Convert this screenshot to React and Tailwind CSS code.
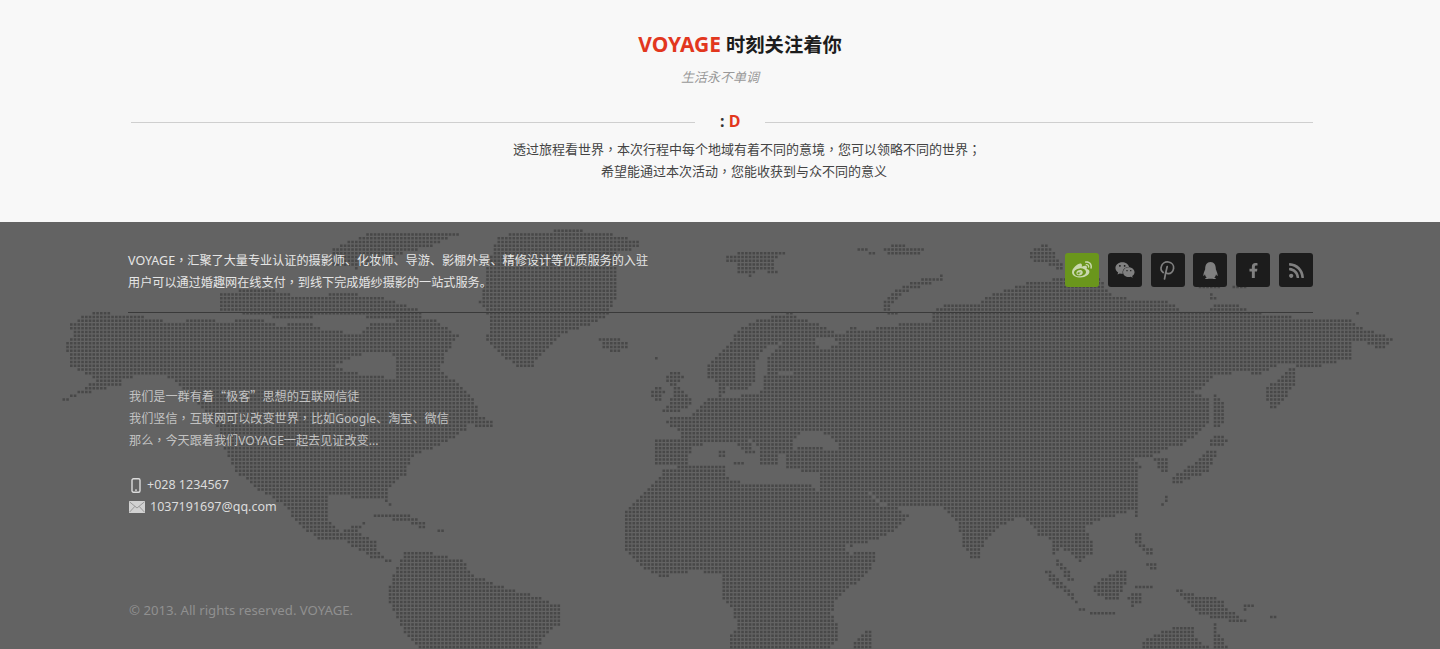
import React from 'react';
import { FaWeibo, FaWeixin, FaQq, FaFacebookF, FaRss } from 'react-icons/fa';

const FONT = '"Noto Sans", "Noto Sans CJK SC", sans-serif';

// outlines traced off 3x crops of the map, so px = origin + x / 3
const traced = (ox, polys) =>
  polys.map((p) => {
    const out = [];
    for (let i = 0; i < p.length; i += 2) out.push([ox + p[i] / 3, 222 + p[i + 1] / 3]);
    return out;
  });

const land = [
  ...traced(40, [
    [90,310,125,285,185,265,235,282,310,285,400,302,470,290,560,300,640,285,720,310,800,300,860,325,960,335,1000,300,1180,290,1255,340,1215,400,1200,445,1260,490,1300,530,1320,570,1270,630,1180,680,1120,700,1095,760,1040,800,1055,860,1030,830,960,830,880,815,860,830,870,900,900,930,985,895,950,930,1010,960,1010,990,1070,1025,1000,1010,900,950,840,955,770,905,735,850,650,800,590,750,555,680,530,610,400,470,330,455,250,470,245,490,130,515,55,545,60,535,130,500,170,470,85,430,85,400,75,365,100,345],
    [540,215,660,195,780,225,900,215,1010,220,1130,260,1160,300,1040,290,900,280,740,290,540,265],
    [880,80,980,35,1260,35,1180,70,1100,90,1030,120,950,140,870,130],
    [1320,240,1345,120,1375,40,1560,25,1710,28,1715,40,1800,55,1800,75,1730,95,1735,160,1725,230,1695,290,1620,320,1565,335,1470,440,1440,440,1380,400,1340,350,1350,290],
    [1285,590,1330,580,1358,600,1358,622,1300,615],
    [995,880,1040,875,1110,880,1165,910,1150,925,1100,900,1000,885],
    [1195,920,1212,920,1212,927,1195,927],
    [1095,990,1140,985,1270,1015,1300,1060,1400,1100,1450,1110,1560,1150,1565,1200,1510,1250,1490,1285,1150,1285,1100,1240,1040,1130,1060,1060],
  ]),
  ...traced(560, [
    [115,345,205,355,205,375,160,395,125,375],
    [288,398,297,398,297,414,288,414],
    [500,100,580,85,690,95,640,110,650,155,600,145,570,165,530,150,530,125,500,120],
    [880,75,945,85,950,100,900,90],
    [965,85,1010,65,1105,85,1060,100,990,100],
    [965,265,970,235,1030,190,1090,170,1150,160,1150,175,1090,190,1040,210,1000,240,990,265,1030,280,990,280],
    [310,470,335,445,365,450,375,470,350,490,375,515,395,535,385,565,310,570,330,545,340,500],
    [270,530,280,490,315,500,305,535],
    [290,575,320,560,320,572],
    [520,715,550,715,550,735,525,725],
    [470,680,495,680,495,705,470,705],
    // eurasia, runs on past the crop edge
    [435,430,500,375,540,320,590,295,690,270,720,290,800,315,840,340,880,315,905,325,970,315,1050,300,1120,300,1120,270,1160,240,1260,250,1275,225,1345,200,1410,180,1500,170,1620,170,1645,215,1700,230,1820,235,1860,265,1950,265,1960,245,2040,250,2070,270,2160,280,2250,295,2370,295,2410,320,2500,350,2470,385,2410,360,2380,360,2380,410,2310,425,2260,440,2160,425,2100,460,2060,450,1960,460,1925,500,1900,510,1950,530,1950,600,1910,640,1860,670,1820,680,1790,700,1740,710,1700,715,1750,730,1730,750,1740,820,1730,860,1650,885,1600,900,1570,920,1605,965,1600,990,1555,1020,1540,1000,1500,980,1480,1000,1475,950,1440,945,1410,900,1390,885,1350,895,1300,930,1270,960,1265,1000,1240,1020,1210,970,1190,900,1150,860,1130,855,1000,850,1050,885,1000,930,950,955,870,975,850,960,770,840,775,780,775,750,700,745,680,735,680,690,650,700,650,725,600,725,600,680,560,640,590,695,575,705,520,660,480,660,420,670,395,680,380,725,310,725,280,725,280,655,340,655,370,650,350,620,310,605,315,590,390,585,440,530,480,525,470,480,440,470],
    // africa
    [310,740,400,730,495,730,505,770,570,790,600,790,680,785,720,780,760,790,770,840,860,970,865,995,950,990,945,1020,915,1060,860,1105,830,1130,815,1180,835,1210,840,1250,820,1270,790,1285,510,1285,510,1245,530,1225,520,1160,490,1130,490,1060,400,1045,375,1055,305,1065,255,1040,190,985,190,875,250,810,300,760],
    [880,1260,935,1215,940,1285,880,1285],
  ]),
  ...traced(980, [
    [860,500,930,435,945,440,945,490,915,530,880,565,860,540],
    [705,520,725,525,735,590,715,620,705,620],
    [685,665,710,635,745,650,720,680],
    [575,770,600,750,650,720,685,685,710,690,690,745,620,775,585,795],
    [520,710,555,700,570,740,545,755],
    [540,850,565,815,570,830,545,850],
    [462,855,480,855,480,888,468,888],
    [150,85,185,68,215,75,250,135,235,145,200,125,155,115],
    [1115,265,1155,265,1135,280],
    [660,195,725,195,720,205,665,205],
    [760,195,800,195,800,205,765,205],
    [685,215,720,225,695,235],
    [460,930,490,925,490,965,520,985,510,1000,470,975],
    [485,1030,530,1015,525,1045],
    [340,1090,410,1045,445,1040,440,1085,410,1135,350,1125],
    [185,1045,210,1050,280,1110,300,1155,270,1130,215,1080],
    [220,1005,235,1010,280,1065,275,1085,235,1040],
    [295,1160,380,1170,450,1180,440,1185,370,1180,300,1170],
    [440,1120,490,1110,490,1145,455,1155],
    [460,1095,520,1085,515,1098],
    [585,1105,610,1105,650,1120,720,1130,750,1165,800,1195,790,1205,710,1190,660,1180,620,1135],
    [485,1260,530,1235,580,1215,645,1215,650,1255,700,1285,485,1285],
    [705,1200,720,1240,755,1285,700,1285],
    [785,1150,825,1140,820,1160,790,1165],
    [870,1178,890,1178,890,1186,870,1186],
  ]),
];

const seas = traced(560, [
  [495,480,520,505,560,505,590,470,585,420,620,375,660,360,665,365,620,405,612,490,600,515,490,528],
  [650,445,700,445,700,455,650,455],
  [765,350,810,345,835,360,800,385,770,370],
  [700,650,740,625,790,630,840,670,830,690,770,675,700,680],
  [920,805,980,850,965,852,920,815],
]).concat(traced(40, [[880,430,975,395,1060,395,1070,470,1000,460,930,450]]));

const inside = (poly, x, y) => {
  let hit = false;
  for (let i = 0, j = poly.length - 1; i < poly.length; j = i++) {
    const [xi, yi] = poly[i];
    const [xj, yj] = poly[j];
    if (yi > y !== yj > y && x < ((xj - xi) * (y - yi)) / (yj - yi) + xi) hit = !hit;
  }
  return hit;
};

const buildDots = () => {
  const pitch = 3.75;
  let d = '';
  for (let y = 222; y < 649; y += pitch) {
    for (let x = 40; x < 1410; x += pitch) {
      if (land.some((p) => inside(p, x + 1.3, y + 1.3)) && !seas.some((p) => inside(p, x + 1.3, y + 1.3))) {
        d += `M${x} ${y}h2.6v2.6h-2.6z`;
      }
    }
  }
  return d;
};

const dots = buildDots();

function WorldMap() {
  return (
    <svg className="absolute top-0 left-0" width="1440" height="427" viewBox="0 222 1440 427">
      <path d={dots} fill="#484848" />
    </svg>
  );
}

const socials = [
  { id: 'weibo', icon: FaWeibo, size: 20, active: true },
  { id: 'wechat', icon: FaWeixin, size: 20 },
  { id: 'pinterest' },
  { id: 'qq', icon: FaQq, size: 17 },
  { id: 'facebook', icon: FaFacebookF, size: 15 },
  { id: 'rss', icon: FaRss, size: 17 },
];

// the wide comma sits mid-cell in the picture, as it does in the TC cut
const Comma = () => <span className="font-['Noto_Sans_CJK_TC']">{'\uFF0C'}</span>;
const Semi = () => <span className="font-['Noto_Sans_CJK_TC']">{'\uFF1B'}</span>;
const Quote = ({ children }) => <span className="font-['Noto_Sans_CJK_SC']">{children}</span>;

function PinterestMark() {
  return (
    <svg width="24" height="24" viewBox="0 0 24 24" fill="none" stroke="#808080" strokeWidth="1.7" strokeLinecap="round">
      <path d="M8.500 21c.7-4 1.700-8.500 2.700-12.500" />
      <path d="M7.200 14.500C5.200 13 4.500 10.800 5.300 8.400 6.200 5.300 9.200 3.500 12.400 4c3.300.5 5.600 3.200 5.200 6.400-.4 3.200-2.900 5.600-5.700 5.200-.9-.1-1.600-.5-2.200-1.100" />
    </svg>
  );
}

function PhoneIcon() {
  return (
    <svg width="10" height="15" viewBox="0 0 10 15" fill="none">
      <rect x="1" y="0.7" width="8" height="13.600" rx="1.500" stroke="#dcdcdc" strokeWidth="1.400" />
      <rect x="4" y="11.500" width="2" height="1.200" fill="#dcdcdc" />
    </svg>
  );
}

function MailIcon() {
  return (
    <svg width="16" height="12" viewBox="0 0 16 12">
      <rect width="16" height="12" fill="#d2d2d2" />
      <path d="M0.500 0.800L8 7l7.500-6.200M0.500 11.200L5.800 5.400M15.500 11.200L10.200 5.400" fill="none" stroke="#8a8a8a" strokeWidth="0.800" />
    </svg>
  );
}

export default function App() {
  return (
    <div className="h-[649px] overflow-hidden bg-[#f8f8f8]" style={{ fontFamily: FONT }}>
      {/* Intro */}
      <section className="h-[222px] pt-[30px] text-center">
        <h2 className="h-[28px] pl-[40px] text-[19.300px] leading-[28px] font-bold text-[#1c1c1c]">
          <span className="text-[21px] text-[#e2371e]">VOYAGE</span> 时刻关注着你
        </h2>
        <p className="mt-[9px] h-[20px] text-[13px] leading-[20px] italic text-[#999999]">生活永不单调</p>
        <div className="mt-[24px] flex h-[22px] items-center pl-[131px] pr-[127px]">
          <div className="h-px w-[564px] bg-[#cfcfcf]" />
          <div className="w-[70px] pb-[2px] pl-[25px] text-left text-[16px] leading-[20px] font-bold text-[#333333]">
            : <span className="text-[#e2371e]">D</span>
          </div>
          <div className="h-px flex-1 bg-[#cfcfcf]" />
        </div>
        <div className="mt-[5px] text-[13px] leading-[22px] text-[#444444]">
          <p className="h-[22px] pl-[54px]">
            透过旅程看世界<Comma />本次行程中每个地域有着不同的意境<Comma />您可以领略不同的世界<Semi />
          </p>
          <p className="h-[22px] pl-[48px]">
            希望能通过本次活动<Comma />您能收获到与众不同的意义
          </p>
        </div>
      </section>

      {/* Footer */}
      <footer className="relative h-[427px] overflow-hidden bg-[#636363]">
        <WorldMap />
        <div className="relative pt-[27px] pl-[128px] pr-[127px]">
          <div className="flex justify-between border-b border-[#3a3a3a] pb-[19px]">
            <div className="text-[12.130px] leading-[22px] text-[#e6e6e6]">
              <p className="h-[22px]">
                <span className="text-[12.500px]">VOYAGE</span><Comma />汇聚了大量专业认证的摄影师、化妆师、导游、影棚外景、精修设计等优质服务的入驻
              </p>
              <p className="h-[22px]">
                用户可以通过婚趣网在线支付<Comma />到线下完成婚纱摄影的一站式服务。
              </p>
            </div>
            <div className="mt-[4px] flex h-[34px] gap-[8.800px]">
              {socials.map(({ id, icon: Icon, size, active }) => (
                <a
                  key={id}
                  className={`flex h-[34px] w-[34px] items-center justify-center rounded-[3px] ${
                    active ? 'bg-[#6a961c] text-[#c9d8ae]' : 'bg-[#1c1c1c] text-[#808080]'
                  }`}
                >
                  {Icon ? <Icon size={size} /> : <PinterestMark />}
                </a>
              ))}
            </div>
          </div>

          <div className="mt-[72px] pl-px text-[12.130px] leading-[22px] text-[#c2c2c2]">
            <p className="h-[22px]">我们是一群有着<Quote>“</Quote>极客<Quote>”</Quote>思想的互联网信徒</p>
            <p className="h-[22px]">我们坚信<Comma />互联网可以改变世界<Comma />比如Google、淘宝、微信</p>
            <p className="h-[22px]">那么<Comma />今天跟着我们VOYAGE一起去见证改变...</p>
          </div>

          <div className="mt-[23px] pl-px text-[12.500px] leading-[22px] text-[#dcdcdc]">
            <div className="flex h-[22px] items-center">
              <span className="ml-[2px] mr-[6px] flex"><PhoneIcon /></span>
              +028 1234567
            </div>
            <div className="flex h-[22px] items-center">
              <span className="mr-[5px] flex"><MailIcon /></span>
              1037191697@qq.com
            </div>
          </div>

          <p className="mt-[81px] h-[22px] pl-px text-[13.200px] leading-[22px] text-[#909090]">© 2013. All rights reserved. VOYAGE.</p>
        </div>
      </footer>
    </div>
  );
}
